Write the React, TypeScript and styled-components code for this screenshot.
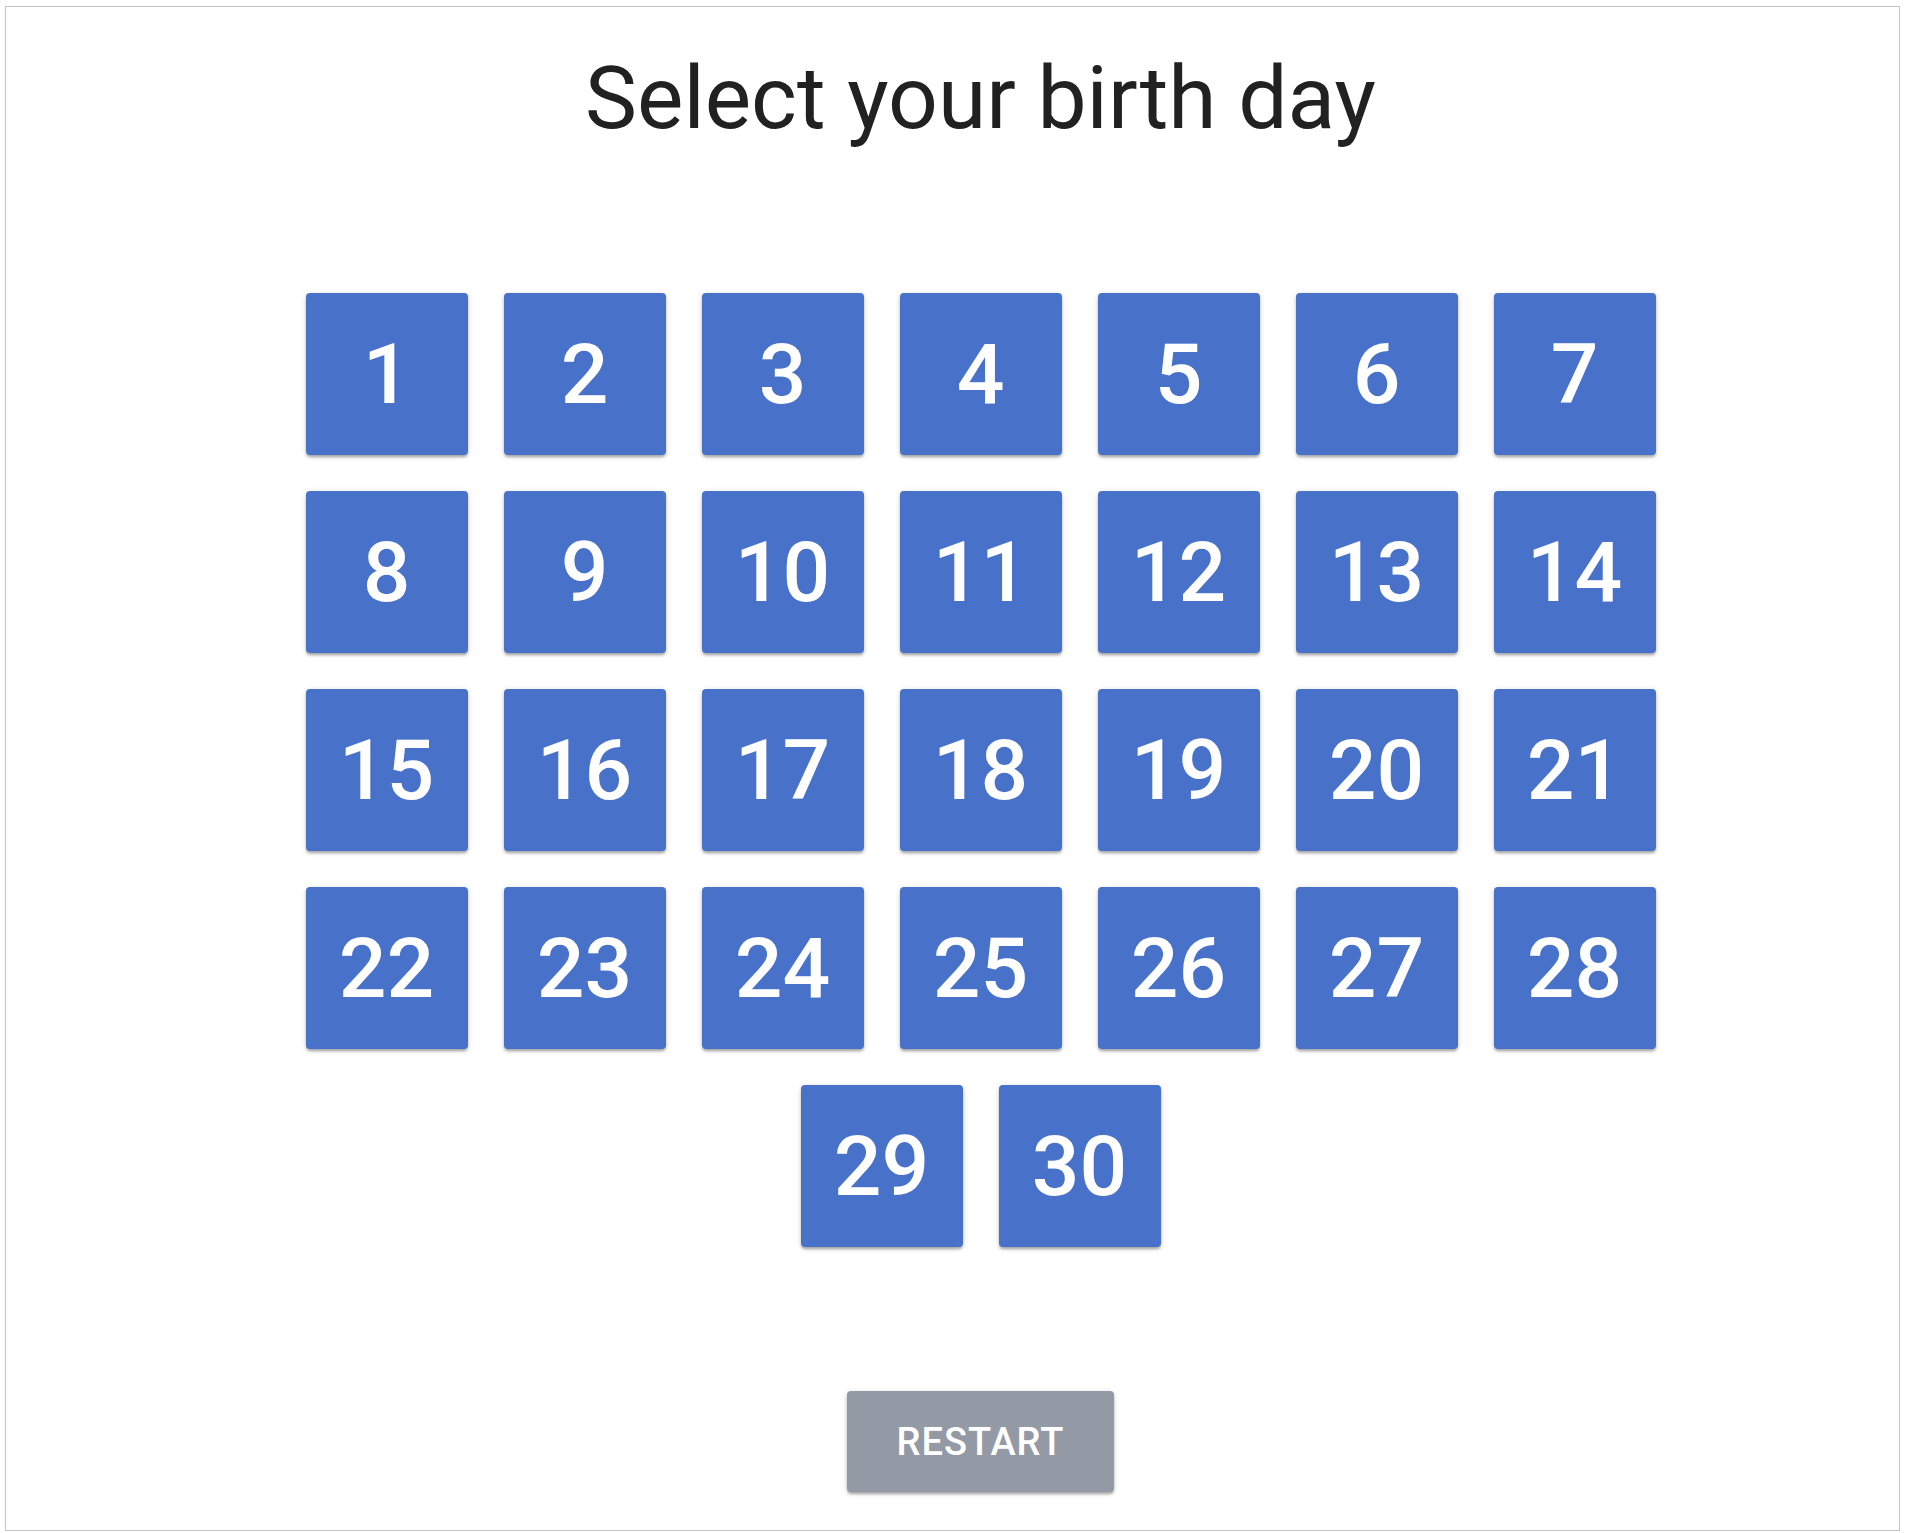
import React from 'react';
import styled, { createGlobalStyle } from 'styled-components';

const GlobalStyle = createGlobalStyle`
  html, body {
    margin: 0;
    padding: 0;
    background: #ffffff;
    font-family: Roboto, "Noto Sans", sans-serif;
  }
`;

const Frame = styled.div`
  margin: 6px 5px 0 5px;
  height: 1525px;
  box-sizing: border-box;
  border: 1px solid #c4c4c4;
  padding: 39px 0 0 56px;
  display: flex;
  flex-direction: column;
  align-items: center;
`;

const Title = styled.h1`
  margin: 0;
  font-size: 87.5px;
  line-height: 105px;
  font-weight: 400;
  color: #212121;
`;

const DayGrid = styled.div`
  margin-top: 142px;
  width: 1350px;
  display: flex;
  flex-wrap: wrap;
  justify-content: center;
  gap: 36px;
`;

const DayTile = styled.button`
  width: 162px;
  height: 162px;
  border: none;
  border-radius: 4px;
  background: #4872ca;
  color: #ffffff;
  font-family: Roboto, sans-serif;
  font-size: 84px;
  font-weight: 500;
  display: flex;
  align-items: center;
  justify-content: center;
  padding: 0;
  cursor: pointer;
  box-shadow: 0 3px 3px -1px rgba(0, 0, 0, 0.2), 0 2px 3px 0 rgba(0, 0, 0, 0.14),
    0 1px 6px 0 rgba(0, 0, 0, 0.12);
`;

const RestartButton = styled.button`
  margin-top: 144px;
  width: 267px;
  height: 101px;
  border: none;
  border-radius: 4px;
  background: #939aa6;
  color: #ffffff;
  font-family: Roboto, sans-serif;
  font-size: 38px;
  font-weight: 500;
  letter-spacing: 1px;
  text-transform: uppercase;
  cursor: pointer;
  box-shadow: 0 3px 3px -1px rgba(0, 0, 0, 0.2), 0 2px 3px 0 rgba(0, 0, 0, 0.14),
    0 1px 6px 0 rgba(0, 0, 0, 0.12);
`;

const days = Array.from({ length: 30 }, (_, i) => i + 1);

export default function App() {
  return (
    <>
      <GlobalStyle />
      <Frame>
        <Title>Select your birth day</Title>
        <DayGrid>
          {days.map((d) => (
            <DayTile key={d}>{d}</DayTile>
          ))}
        </DayGrid>
        <RestartButton>Restart</RestartButton>
      </Frame>
    </>
  );
}
